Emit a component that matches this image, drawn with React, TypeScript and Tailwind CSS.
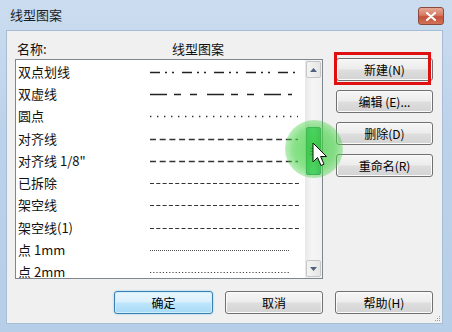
import React from "react";

type Row = { name: string; dash: string; width: number; end: number; color: string };

const rows: Row[] = [
  { name: "双点划线", dash: "10 5 2 5 2 8", width: 1.5, end: 300, color: "#222" },
  { name: "双虚线", dash: "17 7 7 9 7 10", width: 1.6, end: 292, color: "#222" },
  { name: "圆点", dash: "1.4 5.6", width: 1.3, end: 298, color: "#333" },
  { name: "对齐线", dash: "6 3.7", width: 1.3, end: 298, color: "#333" },
  { name: "对齐线 1/8\"", dash: "6 3.7", width: 1.3, end: 298, color: "#333" },
  { name: "已拆除", dash: "4 2.3", width: 1.2, end: 300, color: "#333" },
  { name: "架空线", dash: "4 2.3", width: 1.2, end: 300, color: "#333" },
  { name: "架空线(1)", dash: "4 2.3", width: 1.2, end: 300, color: "#333" },
  { name: "点 1mm", dash: "1 1", width: 1, end: 290, color: "#555" },
  { name: "点 2mm", dash: "1.2 2", width: 1.1, end: 290, color: "#444" },
];

const btn =
  "h-[23px] flex items-center justify-center rounded-[3px] border border-[#707070] bg-[linear-gradient(#f6f6f6_0%,#ececec_48%,#dedede_52%,#d3d3d3_100%)] shadow-[inset_0_0_0_1px_#fbfbfb] text-[12px] text-black";

const ArrowBtn = ({ down }: { down?: boolean }) => (
  <div className="h-[17px] mx-[1px] flex items-center justify-center rounded-[2px] border border-[#c6c6c6] bg-[linear-gradient(90deg,#f4f4f4,#e6e6e6)]">
    <svg width="7" height="4" viewBox="0 0 7 4">
      {down ? <path d="M0 0 L7 0 L3.5 4 Z" fill="#50617d" /> : <path d="M0 4 L7 4 L3.5 0 Z" fill="#50617d" />}
    </svg>
  </div>
);

const PatternList = () => (
  <div className="h-[220px] flex border border-[#7f868f] bg-white overflow-hidden">
    <div className="flex-1 flex flex-col pt-[0.5px] overflow-hidden">
      {rows.map((r) => (
        <div key={r.name} className="h-[22.3px] shrink-0 flex items-center">
          <div className="w-[134px] pl-[2px] text-[13px] leading-[22px] text-[#111] whitespace-nowrap">{r.name}</div>
          <svg width="150" height="22" className="shrink-0">
            <line x1="0" y1="11.5" x2={r.end - 150} y2="11.5" stroke={r.color} strokeWidth={r.width} strokeDasharray={r.dash} />
          </svg>
        </div>
      ))}
    </div>
    <div className="w-[17px] shrink-0 flex flex-col bg-[linear-gradient(90deg,#e8e8e8,#f5f5f5_40%,#f1f1f1)] py-[1px]">
      <ArrowBtn />
      <div className="flex-1 flex flex-col">
        <div className="h-[49px]" />
        <div className="h-[48px] mx-[1px] rounded-[2px] border border-[#2f8f64] bg-[linear-gradient(90deg,#3fbf74,#4fd487_50%,#36b06a)] flex items-center justify-start pl-[3px]">
          <div className="flex flex-col gap-[2px]">
            <div className="w-[5px] h-[1px] bg-[#1f4f38]" />
            <div className="w-[5px] h-[1px] bg-[#1f4f38]" />
            <div className="w-[5px] h-[1px] bg-[#1f4f38]" />
          </div>
        </div>
      </div>
      <ArrowBtn down />
    </div>
  </div>
);

export default function App() {
  return (
    <div className="relative w-[452px] h-[332px] overflow-hidden flex flex-col bg-[linear-gradient(#cbdcef,#bcd2ea_40%,#b7cee8)] font-['Noto_Sans_CJK_SC','Noto_Sans',sans-serif]">
      <div className="h-[30px] shrink-0 flex items-start justify-between pl-[10px] pr-[8px]">
        <span className="mt-[6px] text-[13px] leading-[18px] text-[#1b1f26]">线型图案</span>
        <div className="mt-[7px] w-[26px] h-[18px] rounded-[3px] border border-[#8a4a3e] bg-[linear-gradient(#e6a898,#d77a62_45%,#c5513a_55%,#d27258)] flex items-center justify-center">
          <svg width="10" height="9" viewBox="0 0 10 9">
            <path d="M1 1 L9 8 M9 1 L1 8" stroke="#fff" strokeWidth="2.2" strokeLinecap="round" />
          </svg>
        </div>
      </div>

      <div className="relative flex-1 ml-[6px] mr-[9px] mb-[8px] bg-[#f0f0f0] border border-[#a7bcd5] pt-[7px] pl-[8px] pr-[9px] flex flex-col">
        <div className="flex">
          <div className="w-[308px] flex flex-col">
            <div className="h-[21px] flex items-center text-[13px] text-[#111]">
              <span className="w-[157px] pl-[2px]">名称:</span>
              <span>线型图案</span>
            </div>
            <PatternList />
          </div>
          <div className="ml-[13px] w-[97px] pt-[20px] flex flex-col gap-[9px]">
            <div className={btn}>新建(N)</div>
            <div className={btn}>编辑 (E)...</div>
            <div className={btn}>删除(D)</div>
            <div className={btn}>重命名(R)</div>
          </div>
        </div>
        <div className="mt-[12px] flex justify-end gap-[12px]">
          <div className="w-[99px] h-[23px] flex items-center justify-center rounded-[3px] border border-[#3c7fb1] bg-[linear-gradient(#eaf6fd_0%,#d9f0fc_48%,#bee6fd_52%,#a7d9f5_100%)] shadow-[inset_0_0_0_1px_#cdeefd,0_0_2px_#7ac4ee] text-[12px] text-black">
            确定
          </div>
          <div className={`${btn} w-[98px]`}>取消</div>
          <div className={`${btn} w-[98px]`}>帮助(H)</div>
        </div>
        <div className="absolute right-[2px] bottom-[2px] grid grid-cols-3 gap-[1px]">
          <div />
          <div />
          <div className="w-[1px] h-[1px] bg-[#999]" />
          <div />
          <div className="w-[1px] h-[1px] bg-[#999]" />
          <div className="w-[1px] h-[1px] bg-[#999]" />
          <div className="w-[1px] h-[1px] bg-[#999]" />
          <div className="w-[1px] h-[1px] bg-[#999]" />
          <div className="w-[1px] h-[1px] bg-[#999]" />
        </div>
      </div>

      {/* click highlight and cursor over the scrollbar thumb */}
      <div className="absolute left-[285px] top-[120px] w-[58px] h-[58px] rounded-full bg-[radial-gradient(circle,rgba(60,205,60,0.75)_0%,rgba(75,210,75,0.65)_50%,rgba(110,220,110,0)_100%)] pointer-events-none" />
      <svg className="absolute left-[312px] top-[142px]" width="16" height="26" viewBox="0 0 16 26">
        <path d="M1 1 L1 20 L5.5 15.5 L9 23.5 L12 22.2 L8.6 14.5 L14.5 14.5 Z" fill="#fff" stroke="#111" strokeWidth="1" strokeLinejoin="round" />
      </svg>

      {/* red marker around 新建 */}
      <div className="absolute left-[334px] top-[52px] w-[97px] h-[33px] border-[3px] border-[#e01010] pointer-events-none" />
    </div>
  );
}
